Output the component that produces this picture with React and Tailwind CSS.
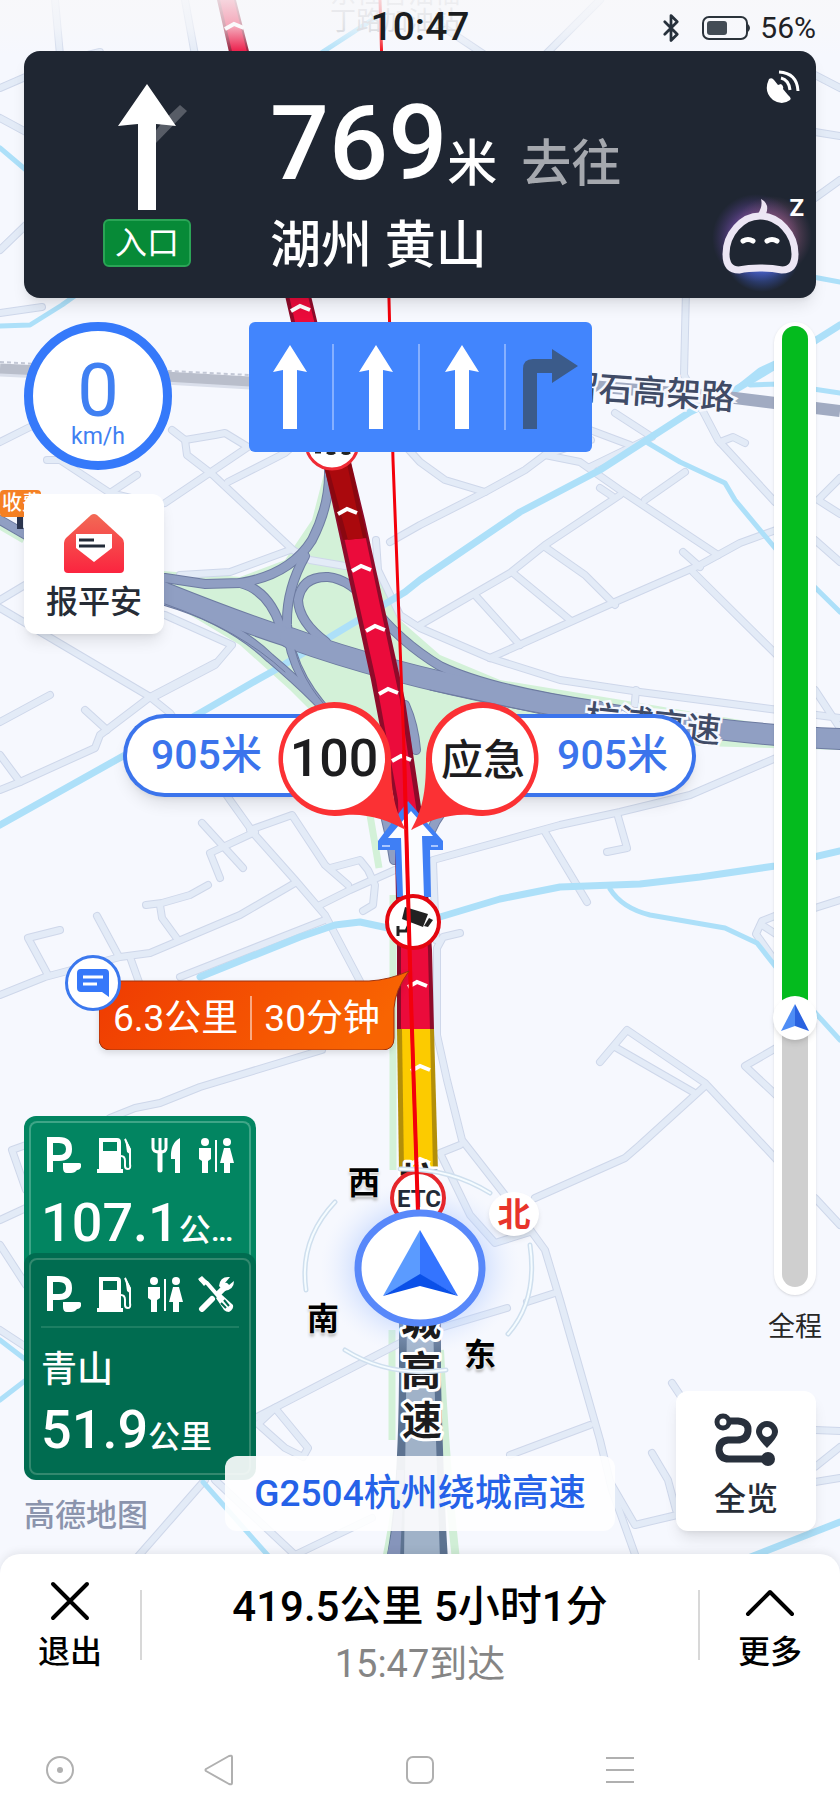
import { Bluetooth } from 'lucide-react';

const minorRoads = [
  'M172 430L185 440L187 455L213 475L293 550L310 560L345 566',
  'M185 440L215 435L225 433L248 447L165 503',
  'M228 482L285 453L300 440',
  'M47 460L60 460L110 493L160 505',
  'M110 493L137 475',
  'M0 442L30 427',
  'M180 575L230 572L290 550',
  'M165 615L232 645L215 665L152 698L0 608',
  'M0 600L25 585',
  'M0 722L50 695',
  'M0 790L20 782L95 748L100 735L150 697L215 663',
  'M20 782L0 755',
  'M85 710L107 730',
  'M150 697L170 713L230 800L255 835L295 880L325 915L362 985',
  'M250 830L292 815L325 865L348 885',
  'M255 832L210 853L220 878',
  'M202 823L243 868',
  'M146 905L162 903L190 895L208 885',
  'M160 905L162 918L178 940',
  'M0 995L45 977L120 957L150 953L240 915L295 883',
  'M97 916L118 955',
  'M60 930L28 938L48 975',
  'M130 957L140 985',
  'M180 977L325 920',
  'M330 868L360 860L368 870L375 885L373 905L363 911',
  'M320 905L350 890L395 870',
  'M686 290L684 375L718 440L775 502',
  'M720 442L733 437L745 443',
  'M590 430L630 445',
  'M615 413L652 437L590 467',
  'M545 455L580 462L620 490L718 555',
  'M390 542L420 525L485 492L525 470L545 455L591 440',
  'M400 440L420 462L445 480L485 492',
  'M420 625L510 573L545 545L620 495',
  'M600 488L612 496',
  'M645 500L685 472',
  'M545 547L585 575L615 605',
  'M513 573L570 620',
  'M475 595L520 645',
  'M490 658L615 602L700 565L740 543L790 525',
  'M683 552L700 567',
  'M693 572L790 668',
  'M376 540L378 570L400 615L420 628L490 658L560 680L640 692L840 718',
  'M636 690L634 712',
  'M840 478L818 500L840 514',
  'M815 540L840 562',
  'M815 690L840 728',
  'M433 860L560 825L620 812L690 795L790 752',
  'M617 813L627 848L607 852',
  'M545 832L587 902',
  'M600 1062L627 1030L705 1083L777 1160',
  'M615 1047L693 1092',
  'M705 1086L640 1145L625 1158L535 1198',
  'M790 1040L745 1066L790 1108',
  'M785 912L762 921L756 934L785 975',
  'M762 925L785 940',
  'M815 908L840 900',
  'M460 933L443 937L437 948L437 1035L447 1080L462 1140L505 1195L545 1250L560 1300L600 1440L612 1490L637 1560',
  'M433 862L436 940',
  'M460 1145L440 1153L470 1215L495 1243L530 1232',
  'M527 1302L555 1293',
  'M255 1418L400 1343L440 1328L507 1308',
  'M510 1455L590 1425',
  'M610 1482L635 1525L677 1515',
  'M652 1453L668 1480L676 1510',
  'M672 1383L682 1398',
  'M815 1430L840 1431',
  'M815 1467L840 1447',
  'M815 1482L840 1478',
  'M815 1198L840 1225',
  'M110 1118L135 1108L160 1103L200 1087L322 1050',
  'M0 1220L26 1208',
  'M26 1145L12 1150L26 1190',
  'M0 1245L26 1285',
  'M0 1330L26 1347',
  'M275 1408L258 1424L285 1448L303 1457L308 1448L275 1408',
  'M205 1480L170 1520L135 1560',
  'M215 1480L295 1555L372 1518',
  'M55 0L60 55',
  'M0 88L60 62L100 52',
  'M185 0L195 55',
  'M545 55L570 30L600 0',
  'M440 25L485 55',
  'M0 118L26 132',
  'M815 75L840 88',
  'M815 132L840 136',
  'M815 198L840 180',
  'M0 250L26 225',
  'M0 313L42 307',
];

const rivers = [
  'M0 825L200 713L257 680L275 670L350 625L405 592L420 580L520 512L600 470L690 412L735 390L775 366L840 325',
  'M440 917L500 899L560 887L640 884L700 877L775 866L840 851',
  'M200 977L300 937L335 925L360 922L388 928',
  'M738 1562L840 1522',
];

const streams = [
  'M648 443L680 462L725 483L735 500L775 548L840 612',
  'M735 390L760 370L775 363',
  'M750 385L780 384L840 393',
  'M610 889Q622 908 650 915L725 928L757 943L790 985L840 1040',
  'M0 1340L26 1360',
  'M0 1400L26 1380',
  'M203 1482L272 1560',
  'M0 326L30 325L62 305L90 285',
  'M0 148L26 170',
  'M318 55L375 18',
  'M813 277L840 282',
];

const ramps = [
  'M0 520L26 535',
  'M165 578L205 584L240 583Q290 575 312 540Q330 505 329 470',
  'M240 583Q268 590 280 625',
  'M305 556Q286 590 287 625Q290 680 345 730Q380 770 394 860',
  'M326 642Q299 622 298 600Q302 576 328 577Q350 579 372 606Q400 642 440 666Q490 690 600 706',
  'M165 601Q230 620 270 658Q320 700 352 740Q376 770 392 815',
  'M405 705Q414 725 416 750',
  'M428 840Q440 790 560 715',
];

const chevrons = [
  [234, 25],
  [300, 307],
  [347, 510],
  [361, 567],
  [375, 627],
  [388, 690],
  [401, 757],
  [417, 983],
  [420, 1067],
  [420, 1160],
];

function MapCanvas() {
  return (
    <svg viewBox="0 0 840 1560" className="absolute inset-0 h-full w-full" aria-hidden="true">
      <defs>
        <radialGradient id="halo">
          <stop offset="0.5" stopColor="#8fb4ff" stopOpacity="0.55" />
          <stop offset="1" stopColor="#dfe9ff" stopOpacity="0" />
        </radialGradient>
        <linearGradient id="topFade" x1="0" y1="0" x2="0" y2="1">
          <stop offset="0" stopColor="#f8f8fa" stopOpacity="0.85" />
          <stop offset="0.5" stopColor="#f8f8fa" stopOpacity="0.65" />
          <stop offset="1" stopColor="#f8f8fa" stopOpacity="0" />
        </linearGradient>
      </defs>

      {/* green belts */}
      <path
        d="M150 570L240 577L285 560L312 520L325 470L338 480L370 560L400 620L440 655L500 680L640 703L840 737V750L700 746L560 722L470 735L440 790L425 850L392 850L375 790L345 745L290 690L240 645L165 600Z"
        fill="#d3f1d8"
      />
      <path d="M0 526L24 540M370 815L379 868M393 895V1170M392 1330V1440" stroke="#d3f1d8" strokeWidth="7" fill="none" />
      <path d="M440 1350Q446 1470 456 1560M386 1560Q392 1530 396 1500" stroke="#d0eed6" strokeWidth="8" fill="none" />

      <g fill="none" strokeLinecap="round" strokeLinejoin="round">
        {minorRoads.map((d) => (
          <path key={d} d={d} stroke="#ced7ea" strokeWidth="8" />
        ))}
        {minorRoads.map((d) => (
          <path key={d} d={d} stroke="#e3ebf7" strokeWidth="6" />
        ))}
        {rivers.map((d) => (
          <path key={d} d={d} stroke="#ade0f9" strokeWidth="7" />
        ))}
        {streams.map((d) => (
          <path key={d} d={d} stroke="#ade0f9" strokeWidth="5" />
        ))}
      </g>

      {/* elevated road */}
      <g fill="none">
        <path d="M0 362L150 370L250 375" stroke="#c3c8d6" strokeWidth="2" strokeDasharray="4 3" />
        <path d="M0 369L165 377L250 382L590 386" stroke="#b9becb" strokeWidth="11" />
        <path d="M590 386L735 398L840 411" stroke="#a1abc2" strokeWidth="12" />
        <path d="M0 375L165 383L250 388" stroke="#dadfeb" strokeWidth="3" />
      </g>

      {/* interchange */}
      <g fill="none" strokeLinecap="round">
        {ramps.map((d) => (
          <path key={d} d={d} stroke="#6d7ba1" strokeWidth="10" />
        ))}
        <path d="M120 572L165 592Q240 622 290 638" stroke="#6d7ba1" strokeWidth="20" />
        <path d="M290 638Q400 678 560 706T840 739" stroke="#6d7ba1" strokeWidth="22" />
        {ramps.map((d) => (
          <path key={d} d={d} stroke="#909fc3" strokeWidth="8" />
        ))}
        <path d="M120 572L165 592Q240 622 290 638" stroke="#909fc3" strokeWidth="18" />
        <path d="M290 638Q400 678 560 706T840 739" stroke="#909fc3" strokeWidth="20" />
        <path d="M165 604Q240 630 285 672M295 650Q305 690 340 720M430 690L560 718" stroke="#6d7ba1" strokeWidth="1" />
      </g>

      <g
        fill="#404b66"
        stroke="#f6f8fe"
        strokeWidth="5"
        paintOrder="stroke"
        className="font-['Noto_Sans_CJK_SC',sans-serif] text-[34px] font-medium"
      >
        <text x="564" y="398" transform="rotate(4 564 398)">留石高架路</text>
        <text x="584" y="729" transform="rotate(6 584 729)">杭浦高速</text>
      </g>

      {/* grey road behind the car */}
      <path d="M386 1560Q398 1500 399 1380V1320H441V1380Q444 1500 448 1560Z" fill="#5d7391" />
      <path d="M386 1560Q396 1520 397 1470L404 1470L400 1560Z" fill="#8695bb" />
      <path d="M407 1320H433L436 1440L440 1560H404Z" fill="#a0b2c8" />

      {/* congested route */}
      <path d="M217 0L236 0L312 300L365 520L405 700L423 820L432 950L434 1030H397V950L394 800L371 680L325 470L286 300Z" fill="#8e0b2a" />
      <path d="M220 0L234 0L309 300L362 520L400 700L418 820L428 950L430 1030H401V950L398 800L376 680L329 470L290 300Z" fill="#eb0b3b" />
      <path d="M321 455L346 440L367 538L343 540Z" fill="#8a0710" />
      <path d="M325 455L343 445L363 538L348 540Z" fill="#aa090d" />
      <path d="M397 1029H434L438 1172H399Z" fill="#b38f09" />
      <path d="M402 1029H430L433 1172H404Z" fill="#fccb00" />

      {/* next manoeuvre */}
      <path d="M397 897L395 850H378V841L408 801L443 841V850H430L431 897Z" fill="#3f7ff5" />
      <path d="M403 897L401 838H388L411 811L433 836H422L424 897Z" fill="#fafcff" />
      <path d="M382 846H390M431 846H438" stroke="#a9c6ff" strokeWidth="2" />

      {chevrons.map(([x, y]) => (
        <path
          key={y}
          d={`M${x - 9} ${y + 4}L${x} ${y - 1}L${x + 10} ${y + 3}`}
          fill="none"
          stroke="#fff"
          strokeWidth="4"
        />
      ))}

      <ellipse cx="420" cy="1268" rx="100" ry="88" fill="url(#halo)" />

      <g
        fill="#1c1c1e"
        stroke="#fff"
        strokeWidth="6"
        strokeLinejoin="round"
        paintOrder="stroke"
        textAnchor="middle"
        className="font-['Noto_Sans_CJK_SC',sans-serif] text-[40px] font-bold"
      >
        <text x="419" y="1197">杭</text>
        <text x="421" y="1335">城</text>
        <text x="421" y="1385">高</text>
        <text x="422" y="1435">速</text>
      </g>

      <g fill="#b7bac2" className="font-['Noto_Sans_CJK_SC',sans-serif] text-[26px]">
        <text x="330" y="3">东社智油福</text>
        <text x="330" y="30">丁路加油站</text>
      </g>

      {/* small markers on the route */}
      <circle cx="332" cy="443" r="26" fill="#fff" stroke="#ef2b35" strokeWidth="3" />
      <path d="M315 452H321M327 452Q331 455 335 452M342 452Q346 455 350 452" fill="none" stroke="#222" strokeWidth="3" />
      <circle cx="413" cy="922" r="26" fill="#fff" stroke="#e3060f" strokeWidth="4" />
      <g fill="#222">
        <path d="M405 907L428 914L423 927L402 919Z" />
        <path d="M429 918L433 920L428 927L424 926Z" />
        <path d="M398 926V936M398 931H406L410 922" fill="none" stroke="#222" strokeWidth="3" />
      </g>
      <circle cx="418" cy="1198" r="26" fill="#fff" stroke="#e5262c" strokeWidth="4" />
      <text x="419" y="1207" textAnchor="middle" fill="#222b38" className="font-['Roboto',sans-serif] text-[24px] font-bold">ETC</text>

      {/* compass ring and car */}
      <g fill="none" strokeLinecap="round">
        <path d="M335 1202Q299 1240 306 1290M345 1350Q390 1378 446 1370M400 1169Q450 1168 490 1193M530 1245Q538 1300 508 1334" stroke="#cfdfee" strokeWidth="5" />
        <path d="M335 1202Q299 1240 306 1290M345 1350Q390 1378 446 1370M400 1169Q450 1168 490 1193M530 1245Q538 1300 508 1334" stroke="#f5fcff" strokeWidth="2" />
      </g>
      <path d="M380 0L389 300L393 460L404 750L411 1000L418 1212" fill="none" stroke="#f3000b" strokeWidth="3" />
      <path d="M404 750L411 1000L418 1212" fill="none" stroke="#f3000b" strokeWidth="4" />
      <ellipse cx="420" cy="1268" rx="62" ry="55" fill="#fff" stroke="#5888fa" strokeWidth="7" />
      <path d="M420 1230L383 1296L420 1275Z" fill="#5b9bff" />
      <path d="M420 1230L458 1296L420 1275Z" fill="#3474ff" />
      <path d="M420 1274L383 1296L420 1286L458 1296Z" fill="#0a50e8" />

      <rect width="840" height="55" fill="url(#topFade)" />
    </svg>
  );
}

function CameraBubble({ flip, children }) {
  return (
    <div className="absolute top-0 flex h-[130px] w-[130px] data-[flip=false]:right-0 data-[flip=true]:left-0" data-flip={flip}>
      <svg viewBox="0 0 130 130" className="absolute inset-0 h-full w-full" aria-hidden="true">
        <g transform={flip ? 'translate(130 0) scale(-1 1)' : undefined}>
          <path
            d="M58 1A57 57 0 0 1 115 58C115 90 118 108 130 129C112 119 90 112 70 114A57 57 0 1 1 58 1Z"
            fill="#fb3134"
          />
          <circle cx="58" cy="58" r="51" fill="#fff" />
        </g>
      </svg>
      <span className="relative flex h-[116px] w-[116px] items-center justify-center data-[flip=true]:ml-auto" data-flip={flip}>
        {children}
      </span>
    </div>
  );
}

function MapPins() {
  return (
    <>
      <div className="absolute left-0 top-[490px] h-[27px] w-[41px] overflow-hidden rounded-sm bg-[#f58024] pl-0.5 text-[20px] leading-[26px] font-medium whitespace-nowrap text-white">
        收费
      </div>
      <span className="absolute left-[17px] top-[517px] h-3 w-1.5 bg-[#2c3650]" />

      <div className="absolute left-[123px] top-[701px] h-[130px] w-[283px]">
        <div className="absolute left-0 top-[13px] flex h-[83px] w-[210px] items-center rounded-l-full border-4 border-r-0 border-[#3b74ec] bg-white pl-6 text-[41px] leading-none font-medium text-[#3b74ec] shadow-lg">
          905米
        </div>
        <CameraBubble flip={false}>
          <span className="text-[52px] leading-none font-medium text-[#1d1d1f]">100</span>
        </CameraBubble>
      </div>

      <div className="absolute left-[411px] top-[701px] h-[130px] w-[285px]">
        <div className="absolute right-0 top-[13px] flex h-[83px] w-[210px] items-center justify-end rounded-r-full border-4 border-l-0 border-[#3b74ec] bg-white pr-6 text-[41px] leading-none font-medium text-[#3b74ec] shadow-lg">
          905米
        </div>
        <CameraBubble flip>
          <span className="pt-1 text-[42px] leading-none font-medium text-[#1d1d1f]">应急</span>
        </CameraBubble>
      </div>

      {/* jam length and time */}
      <div className="absolute left-[99px] top-[970px] h-20 w-[311px]">
        <svg viewBox="0 0 311 80" className="absolute inset-0 h-full w-full drop-shadow-md" aria-hidden="true">
          <defs>
            <linearGradient id="jam" x1="0" y1="0" x2="1" y2="0.2">
              <stop offset="0" stopColor="#ef3a02" />
              <stop offset="1" stopColor="#f86402" />
            </linearGradient>
          </defs>
          <path
            d="M10 11H270Q290 10 310 1Q296 20 295 38V68Q295 80 283 80H12Q0 80 0 68V21Q0 11 10 11Z"
            fill="url(#jam)"
            stroke="#9c3310"
            strokeWidth="1"
          />
        </svg>
        <div className="relative flex h-full items-center gap-3 pt-4 pl-3.5 text-[37px] leading-none text-white">
          <span>6.3公里</span>
          <span className="h-11 w-0.5 bg-white/50" />
          <span>30分钟</span>
        </div>
      </div>
      <div className="absolute left-[65px] top-[955px] flex h-14 w-14 items-center justify-center rounded-full border-3 border-[#3b78ee] bg-white">
        <svg viewBox="0 0 34 30" className="h-[30px] w-[34px]" aria-hidden="true">
          <path d="M5 1H29Q33 1 33 5V29L26 24H5Q1 24 1 20V5Q1 1 5 1Z" fill="#3678fa" />
          <path d="M7 9H27M7 16H21" stroke="#fff" strokeWidth="3" />
        </svg>
      </div>

      <div className="text-[32px] leading-8 font-bold text-black [text-shadow:0_0_3px_#fff,0_0_3px_#fff,0_3px_3px_#aaa]">
        <span className="absolute left-[348px] top-[1167px]">西</span>
        <span className="absolute left-[307px] top-[1303px]">南</span>
        <span className="absolute left-[464px] top-[1339px]">东</span>
      </div>
      <span className="absolute left-[489px] top-[1192px] flex h-11 w-[50px] items-center justify-center rounded-[50%] bg-white text-[33px] leading-none font-bold text-[#e8342b] shadow-md">
        北
      </span>
    </>
  );
}

function StatusBar() {
  return (
    <div className="relative grid h-[51px] grid-cols-3 items-center px-6 pt-1 text-[#1b1d20]">
      <span />
      <span className="text-center text-[39px] leading-none font-medium">10:47</span>
      <span className="flex items-center justify-end gap-2 text-[30px] leading-none text-[#1f2226]">
        <Bluetooth className="mr-2 h-[30px] w-[30px] text-[#27313c]" strokeWidth={2.2} />
        <svg viewBox="0 0 50 26" className="h-[26px] w-[50px]" aria-hidden="true">
          <rect x="1" y="2" width="44" height="22" rx="6" fill="none" stroke="#2b333b" strokeWidth="2" />
          <rect x="5" y="6" width="20" height="14" rx="3" fill="#434c55" />
          <path d="M46 9Q50 13 46 17Z" fill="#2b333b" />
        </svg>
        56%
      </span>
    </div>
  );
}

function RobotIcon() {
  return (
    <svg viewBox="0 0 100 100" className="h-[100px] w-[100px]" aria-hidden="true">
      <defs>
        <radialGradient id="g1">
          <stop offset="0.4" stopColor="#7c4fa8" />
          <stop offset="1" stopColor="#4b3a85" stopOpacity="0" />
        </radialGradient>
        <radialGradient id="g2">
          <stop offset="0.3" stopColor="#4a6ce0" />
          <stop offset="1" stopColor="#3a58c4" stopOpacity="0" />
        </radialGradient>
        <radialGradient id="g3">
          <stop offset="0.3" stopColor="#8c5575" />
          <stop offset="1" stopColor="#6d4a68" stopOpacity="0" />
        </radialGradient>
      </defs>
      <circle cx="44" cy="46" r="44" fill="url(#g1)" />
      <circle cx="60" cy="44" r="40" fill="url(#g3)" />
      <circle cx="50" cy="62" r="38" fill="url(#g2)" />
      <path d="M49 7Q58 12 54 22L46 22Q51 14 49 7Z" fill="#ece4f2" />
      <path d="M48 24C67 24 83 42 83 62Q83 78 70 78Q60 76 48 76Q36 76 27 78Q14 78 14 62C14 42 30 24 48 24Z" fill="#1f2632" stroke="#ece6f4" strokeWidth="7" />
      <path d="M31 49Q36 46 41 49M55 49Q60 46 65 49" stroke="#fff" strokeWidth="5" strokeLinecap="round" fill="none" />
    </svg>
  );
}

function GuidanceCard() {
  return (
    <section className="relative mx-6 flex h-[247px] rounded-2xl bg-[#1f2632] text-white shadow-lg">
      <div className="flex w-[246px] shrink-0 flex-col items-center gap-2 pt-8">
        <svg viewBox="0 0 80 128" className="h-32 w-20" aria-hidden="true">
          <path d="M47 50V62L80 28L73 22L56 38Z" fill="#575c66" />
          <path d="M40 1L69 43Q60 42 49 41V127H31V41Q20 42 11 43Z" fill="#fff" />
        </svg>
        <span className="flex h-12 w-[88px] items-center justify-center rounded-md border-2 border-[#2ba456] bg-[#078a37] text-[32px] leading-none">
          入口
        </span>
      </div>
      <div className="flex flex-1 flex-col">
        <div className="flex h-[146px] items-end whitespace-nowrap">
          <span className="text-[104px] leading-[106px] font-medium">769</span>
          <span className="text-[50px] leading-[66px] font-medium">米</span>
          <span className="ml-6 text-[50px] leading-[66px] font-medium text-[#a5a8ae]">去往</span>
        </div>
        <div className="mt-3.5 text-[51px] leading-[70px] font-medium">湖州 黄山</div>
      </div>
      <div className="flex w-28 flex-col items-end justify-between pt-[18px]">
        <svg viewBox="0 0 36 36" className="mr-4 h-9 w-9" aria-hidden="true">
          <path d="M5 10Q8 8 10 11L14 16L17 15Q20 17 19 20L24 26Q28 29 26 31Q18 37 9 31Q-1 23 5 10Z" fill="#fff" />
          <path d="M17 9Q25 11 26 21M15 3Q33 4 34 22" fill="none" stroke="#fff" strokeWidth="3" />
        </svg>
        <button type="button" aria-label="语音助手" className="relative mr-1 mb-1.5">
          <RobotIcon />
          <span className="absolute top-0.5 right-2 text-[24px] leading-7 font-bold">Z</span>
        </button>
      </div>
    </section>
  );
}

function LaneArrow() {
  return (
    <svg viewBox="0 0 40 86" className="h-[86px] w-10" aria-hidden="true">
      <path d="M20 1L37 28L27 26V85H13V26L3 28Z" fill="#fff" />
    </svg>
  );
}

function LanePanel() {
  return (
    <div className="grid h-[130px] w-[343px] grid-cols-4 divide-x-2 divide-[#86b0ff] rounded-md bg-[#4285fd] py-[22px]">
      <span className="flex items-center justify-center"><LaneArrow /></span>
      <span className="flex items-center justify-center"><LaneArrow /></span>
      <span className="flex items-center justify-center"><LaneArrow /></span>
      <span className="flex items-center justify-center">
        <svg viewBox="0 0 58 86" className="h-[86px] w-[58px]" aria-hidden="true">
          <path d="M3 85V25Q3 15 13 15H32V5L58 22L32 39V29H17V85Z" fill="#3b5b8a" />
        </svg>
      </span>
    </div>
  );
}

function ParkingIcon() {
  return (
    <svg viewBox="0 0 36 36" className="h-9 w-9" aria-hidden="true">
      <path d="M5 35V3H14Q24 3 24 12Q24 21 14 21H5" fill="none" stroke="#fff" strokeWidth="6" />
      <path d="M18 26H34Q37 26 36 30Q35 33 32 33Q30 36 26 36H22Q18 36 18 31Z" fill="#fff" />
    </svg>
  );
}

function FuelIcon() {
  return (
    <svg viewBox="0 0 36 36" className="h-9 w-9" aria-hidden="true">
      <path d="M3 1H21Q25 1 25 5V32H27V36H1V32H3ZM7 5V14H21V5Z" fill="#fff" fillRule="evenodd" />
      <path d="M25 19Q29 19 29 24V29Q29 32 32 32Q35 32 34 27V13L29 2" fill="none" stroke="#fff" strokeWidth="2" />
      <path d="M29 1L35 12V18L31 15Z" fill="#fff" />
    </svg>
  );
}

function FoodIcon() {
  return (
    <svg viewBox="0 0 36 36" className="h-9 w-9" aria-hidden="true">
      <path d="M6 1V11Q6 15 13 15Q19 15 19 11V1M13 1V34" fill="none" stroke="#fff" strokeWidth="3" />
      <path d="M13 16V33" stroke="#fff" strokeWidth="5" strokeLinecap="round" />
      <path d="M33 1V36H28V22H24Q23 6 33 1Z" fill="#fff" />
    </svg>
  );
}

function ToiletIcon() {
  return (
    <svg viewBox="0 0 36 36" className="h-9 w-9" aria-hidden="true">
      <circle cx="7" cy="5" r="4" fill="#fff" />
      <circle cx="29" cy="5" r="4" fill="#fff" />
      <path d="M1 11H13V22L10 24V36H4V24L1 22ZM17 3H19V35H17ZM26 11H32L36 26H32V36H26V26H22Z" fill="#fff" />
    </svg>
  );
}

function RepairIcon() {
  return (
    <svg viewBox="0 0 36 36" className="h-9 w-9" aria-hidden="true">
      <path d="M2 3L9 7L22 22" fill="none" stroke="#fff" strokeWidth="4" />
      <path d="M0 3L4 0L10 6L6 10Z" fill="#fff" />
      <path d="M18 22L23 18L35 29Q36 33 31 36Q28 36 26 34Z" fill="#fff" />
      <path d="M26 24L31 30M23 27L28 32" stroke="#006c50" strokeWidth="2" />
      <path d="M4 33L14 23M21 17L28 10" stroke="#fff" strokeWidth="6" strokeLinecap="round" />
      <path d="M32 1Q22 0 21 10L26 15Q36 14 36 5L31 9L27 7Z" fill="#fff" />
    </svg>
  );
}

function ServiceAreas() {
  return (
    <div className="w-[232px] text-white">
      <div className="h-[149px] rounded-t-xl bg-[#028561] px-[5px] pt-[5px]">
        <div className="h-full rounded-t-lg border-2 border-b-0 border-[#3fa587] pt-3.5 pl-2.5">
          <div className="flex gap-[15px] pl-1">
            <ParkingIcon />
            <FuelIcon />
            <FoodIcon />
            <ToiletIcon />
          </div>
          <p className="mt-5 whitespace-nowrap">
            <span className="text-[54px] leading-[60px] font-medium">107.1</span>
            <span className="text-[32px] font-medium">公…</span>
          </p>
        </div>
      </div>
      <div className="relative -mt-3 h-[227px] rounded-xl bg-[#006c50] p-[5px]">
        <div className="h-full rounded-lg border-2 border-[#33896f] px-2.5 pt-4">
          <div className="flex gap-[15px] pl-1">
            <ParkingIcon />
            <FuelIcon />
            <ToiletIcon />
            <RepairIcon />
          </div>
          <div className="mt-3.5 h-0.5 bg-[#1d7f63]" />
          <p className="mt-5 text-[36px] leading-[44px] font-medium">青山</p>
          <p className="mt-2 whitespace-nowrap">
            <span className="text-[54px] leading-[60px] font-medium">51.9</span>
            <span className="text-[32px] font-medium">公里</span>
          </p>
        </div>
      </div>
    </div>
  );
}

function SquareButton({ label, children }) {
  return (
    <button
      type="button"
      className="flex h-[140px] w-[140px] flex-col items-center gap-2 rounded-xl bg-white pt-[18px] text-[32px] leading-10 font-medium text-[#262c36] shadow-lg"
    >
      <span className="flex h-[62px] items-center">{children}</span>
      {label}
    </button>
  );
}

function Progress() {
  return (
    <div className="flex w-[42px] flex-1 flex-col items-center">
      <div className="flex w-full flex-1 rounded-full bg-white p-2 pt-1 shadow-sm">
        <div className="relative w-full rounded-full bg-[#cfcfcf]">
          <div className="h-[72%] rounded-t-full bg-[#04bb1e]" />
          <span className="absolute top-[72%] left-1/2 flex h-11 w-11 -translate-x-1/2 -translate-y-1/2 items-center justify-center rounded-full bg-white shadow-md">
            <svg viewBox="0 0 30 30" className="h-[30px] w-[30px]" aria-hidden="true">
              <path d="M15 1L1 28L15 23Z" fill="#4f8df5" />
              <path d="M15 1L29 28L15 23Z" fill="#2a62e0" />
            </svg>
          </span>
        </div>
      </div>
      <span className="mt-4 text-[27px] leading-8 whitespace-nowrap text-[#262626]">全程</span>
    </div>
  );
}

function BottomSheet() {
  return (
    <footer className="relative rounded-t-[20px] bg-white shadow-[0_-2px_8px_rgba(0,0,0,0.08)]">
      <div className="flex h-[166px] items-start justify-between pt-6 text-black">
        <button type="button" className="flex w-[140px] flex-col items-center gap-1 text-[32px] leading-10 font-medium">
          <svg viewBox="0 0 50 50" className="h-[50px] w-[50px]" fill="none" stroke="currentColor" strokeWidth="4" strokeLinecap="round" aria-hidden="true">
            <path d="M8 6L42 40M42 6L8 40" />
          </svg>
          退出
        </button>
        <span className="mt-3 h-[70px] w-0.5 bg-[#d8d8d8]" />
        <div className="flex-1 text-center">
          <p className="text-[42px] leading-[58px] font-medium">419.5公里 5小时1分</p>
          <p className="text-[38px] leading-[56px] text-[#858585]">15:47到达</p>
        </div>
        <span className="mt-3 h-[70px] w-0.5 bg-[#d8d8d8]" />
        <button type="button" className="flex w-[140px] flex-col items-center gap-1 text-[32px] leading-10 font-medium">
          <svg viewBox="0 0 50 50" className="h-[50px] w-[50px]" fill="none" stroke="currentColor" strokeWidth="4" strokeLinecap="round" strokeLinejoin="round" aria-hidden="true">
            <path d="M3 36L25 14L47 36" />
          </svg>
          更多
        </button>
      </div>
      <nav className="grid h-[100px] grid-cols-[3fr_5fr_5fr_5fr_3fr] items-center justify-items-center">
        <button type="button" aria-label="助手">
          <svg viewBox="0 0 32 32" className="h-8 w-8" fill="none" stroke="#b0b0b0" strokeWidth="2" aria-hidden="true">
            <circle cx="16" cy="16" r="13" />
            <circle cx="16" cy="16" r="3" fill="#b0b0b0" stroke="none" />
          </svg>
        </button>
        <button type="button" aria-label="返回">
          <svg viewBox="0 0 32 32" className="h-8 w-8" fill="none" stroke="#b0b0b0" strokeWidth="2" strokeLinejoin="round" aria-hidden="true">
            <path d="M2 15Q1 16 2 17L25 30Q28 31 28 29V3Q28 1 25 2Z" />
          </svg>
        </button>
        <button type="button" aria-label="主页">
          <svg viewBox="0 0 32 32" className="h-8 w-8" fill="none" stroke="#b0b0b0" strokeWidth="2" aria-hidden="true">
            <rect x="3" y="3" width="26" height="26" rx="6" />
          </svg>
        </button>
        <button type="button" aria-label="最近任务">
          <svg viewBox="0 0 32 32" className="h-8 w-8" fill="none" stroke="#b0b0b0" strokeWidth="2" aria-hidden="true">
            <path d="M2 4H30M2 16H30M2 28H30" />
          </svg>
        </button>
      </nav>
    </footer>
  );
}

export default function App() {
  return (
    <div className="relative flex min-h-screen flex-col overflow-hidden bg-[#f6f8fe] font-['Roboto','Noto_Sans_CJK_SC',sans-serif]">
      <div className="absolute top-0 left-1/2 h-[1560px] w-[840px] -translate-x-1/2">
        <MapCanvas />
        <MapPins />
      </div>

      <StatusBar />
      <GuidanceCard />

      <main className="relative grid flex-1 grid-cols-[minmax(0,1fr)_auto_minmax(0,1fr)] px-6 pt-6">
        <div className="flex flex-col items-start pb-[18px]">
          <div className="flex h-[148px] w-[148px] flex-col items-center rounded-full border-9 border-[#3579fa] bg-white pt-7 text-[#4080f2]">
            <span className="text-[74px] leading-[64px]">0</span>
            <span className="text-[23px] leading-7">km/h</span>
          </div>
          <div className="mt-6">
            <SquareButton label="报平安">
              <svg viewBox="0 0 60 60" className="h-[60px] w-[60px]" aria-hidden="true">
                <defs>
                  <linearGradient id="mail" x1="0" y1="0" x2="0" y2="1">
                    <stop offset="0" stopColor="#f26a55" />
                    <stop offset="1" stopColor="#fb243f" />
                  </linearGradient>
                </defs>
                <path d="M27 2Q30 0 33 2L58 25Q60 27 60 30V56Q60 60 56 60H4Q0 60 0 56V30Q0 27 2 25Z" fill="url(#mail)" />
                <path d="M12 21H48V35L30 49L12 35Z" fill="#fff" />
                <path d="M15 27H30M15 33H41" stroke="#222b38" strokeWidth="3" />
              </svg>
            </SquareButton>
          </div>
          <div className="mt-auto">
            <ServiceAreas />
            <p className="mt-4 text-[31px] leading-10 font-medium text-[#8b94ad]">高德地图</p>
          </div>
        </div>

        <div className="flex w-[343px] flex-col items-center justify-between pb-[23px]">
          <LanePanel />
          <div className="relative flex h-[75px] items-center rounded-xl bg-white/90 px-[29px] text-[37px] leading-none font-medium whitespace-nowrap text-[#2562e8]">
            G2504杭州绕城高速
          </div>
        </div>

        <div className="flex flex-col items-end pb-[23px]">
          <Progress />
          <div className="mt-12">
            <SquareButton label="全览">
              <svg viewBox="0 0 64 54" className="h-[54px] w-16" fill="none" stroke="#28303c" strokeWidth="7" aria-hidden="true">
                <path d="M16 8H24Q35 9 34 18Q33 27 23 27H14Q5 28 5 37Q6 46 15 46H50" />
                <circle cx="9" cy="9" r="6" fill="#fff" strokeWidth="5" />
                <circle cx="54" cy="46" r="7" fill="#28303c" stroke="none" />
                <path d="M54 35Q43 24 43 19A11 11 0 0 1 65 19Q65 24 54 35ZM54 14A5 5 0 1 0 54 24A5 5 0 1 0 54 14Z" transform="translate(-1 0)" fill="#28303c" fillRule="evenodd" stroke="none" />
              </svg>
            </SquareButton>
          </div>
        </div>
      </main>

      <BottomSheet />
    </div>
  );
}
